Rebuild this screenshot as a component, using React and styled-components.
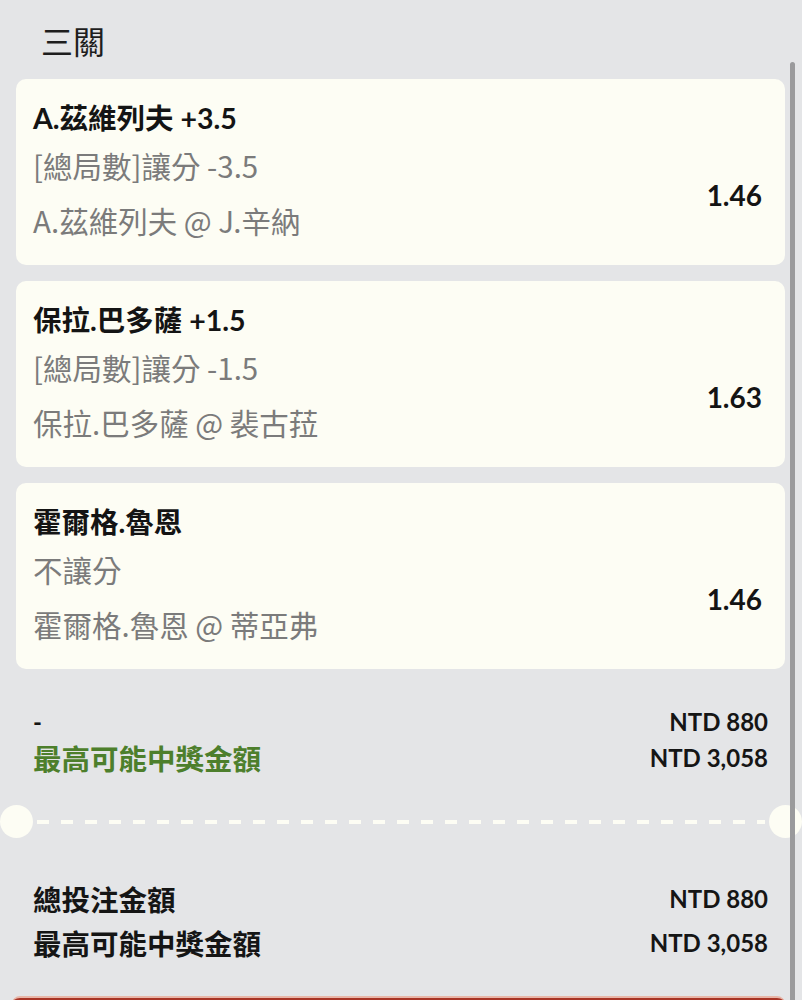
import React from 'react'
import styled, { createGlobalStyle } from 'styled-components'

const GlobalStyle = createGlobalStyle`
  html, body {
    margin: 0;
    padding: 0;
    background: #e4e5e7;
  }
  body {
    font-family: Lato, "Noto Sans CJK TC", sans-serif;
    color: #1c1c1c;
  }
`

const legs = [
  { pick: 'A.茲維列夫 +3.5', market: '[總局數]讓分 -3.5', match: 'A.茲維列夫 @ J.辛納', odds: '1.46' },
  { pick: '保拉.巴多薩 +1.5', market: '[總局數]讓分 -1.5', match: '保拉.巴多薩 @ 裴古菈', odds: '1.63' },
  { pick: '霍爾格.魯恩', market: '不讓分', match: '霍爾格.魯恩 @ 蒂亞弗', odds: '1.46' },
]

export default function App() {
  return (
    <>
      <GlobalStyle />
      <Page>
        <Header>三關</Header>
        <Cards>
          {legs.map((leg, i) => (
            <Card key={i}>
              <Pick>{leg.pick}</Pick>
              <CardBody>
                <Details>
                  <Market>{leg.market}</Market>
                  <Match>{leg.match}</Match>
                </Details>
                <Odds>{leg.odds}</Odds>
              </CardBody>
            </Card>
          ))}
        </Cards>

        <Summary>
          <Row>
            <Dash>-</Dash>
            <Amount>NTD 880</Amount>
          </Row>
          <Row>
            <Label $green>最高可能中獎金額</Label>
            <Amount>NTD 3,058</Amount>
          </Row>
        </Summary>

        <Divider>
          <Notch />
          <Dashes />
          <Notch />
        </Divider>

        <Totals>
          <Row>
            <Label>總投注金額</Label>
            <Amount>NTD 880</Amount>
          </Row>
          <Row>
            <Label>最高可能中獎金額</Label>
            <Amount>NTD 3,058</Amount>
          </Row>
        </Totals>

        <SubmitBar />
        <ScrollThumb />
      </Page>
    </>
  )
}

const Page = styled.div`
  position: relative;
  width: 802px;
  height: 1000px;
  overflow: hidden;
  background: #e4e5e7;
`

const Header = styled.div`
  padding: 20px 0 19px 41px;
  font-family: "Noto Sans CJK TC", sans-serif;
  font-size: 32px;
  line-height: 40px;
  color: #1e1e1e;
`

const Cards = styled.div`
  display: flex;
  flex-direction: column;
  gap: 16px;
  margin: 0 17px 0 16px;
`

const Card = styled.div`
  background: #fdfdf4;
  border-radius: 10px;
  padding: 22px 23px 25px 17px;
`

const Pick = styled.div`
  font-family: Lato, "Noto Sans CJK TC", sans-serif;
  font-weight: 700;
  font-size: 28.5px;
  line-height: 34px;
  color: #141414;
`

const CardBody = styled.div`
  display: flex;
  align-items: center;
  justify-content: space-between;
  margin-top: 10px;
`

const Details = styled.div`
  display: flex;
  flex-direction: column;
  gap: 15px;
  font-family: "Noto Sans CJK TC", sans-serif;
  font-size: 29.5px;
  line-height: 40px;
  color: #7b7b7b;
`

const Market = styled.div``

const Match = styled.div``

const Odds = styled.div`
  font-family: Lato, sans-serif;
  font-weight: 700;
  font-size: 28px;
  color: #141414;
  padding-top: 4px;
`

const Summary = styled.div`
  display: flex;
  flex-direction: column;
  gap: 1px;
  margin-top: 35px;
  padding: 0 34px 0 33px;
`

const Row = styled.div`
  display: flex;
  justify-content: space-between;
  align-items: center;
  height: 35px;
`

const Label = styled.div`
  font-family: "Noto Sans CJK TC", sans-serif;
  font-weight: 700;
  font-size: 28.5px;
  line-height: 35px;
  color: ${p => (p.$green ? '#4d7f2c' : '#151515')};
`

const Dash = styled.div`
  font-family: Lato, sans-serif;
  font-weight: 700;
  font-size: 24px;
  line-height: 29px;
  color: #151515;
`

const Amount = styled.div`
  font-family: Lato, sans-serif;
  font-weight: 700;
  font-size: 24px;
  line-height: 35px;
  color: #151515;
`

const Divider = styled.div`
  display: flex;
  align-items: center;
  margin-top: 30px;
`

const Notch = styled.div`
  width: 33px;
  height: 33px;
  border-radius: 50%;
  background: #fdfdf4;
  flex-shrink: 0;
`

const Dashes = styled.div`
  flex: 1;
  height: 4px;
  margin: 0 4px;
  background: repeating-linear-gradient(
    to right,
    #fdfdf4 0 12px,
    transparent 12px 24px
  );
`

const Totals = styled.div`
  display: flex;
  flex-direction: column;
  gap: 9px;
  margin-top: 43px;
  padding: 0 34px 0 33px;
`

const SubmitBar = styled.div`
  margin: 36px 17px 0 12px;
  height: 60px;
  border-radius: 8px;
  background: #a83426;
  border-top: 2px solid #e8b6a8;
`

const ScrollThumb = styled.div`
  position: absolute;
  top: 62px;
  right: 7px;
  width: 5px;
  height: 960px;
  border-radius: 3px;
  background: #9a9a9c;
`
